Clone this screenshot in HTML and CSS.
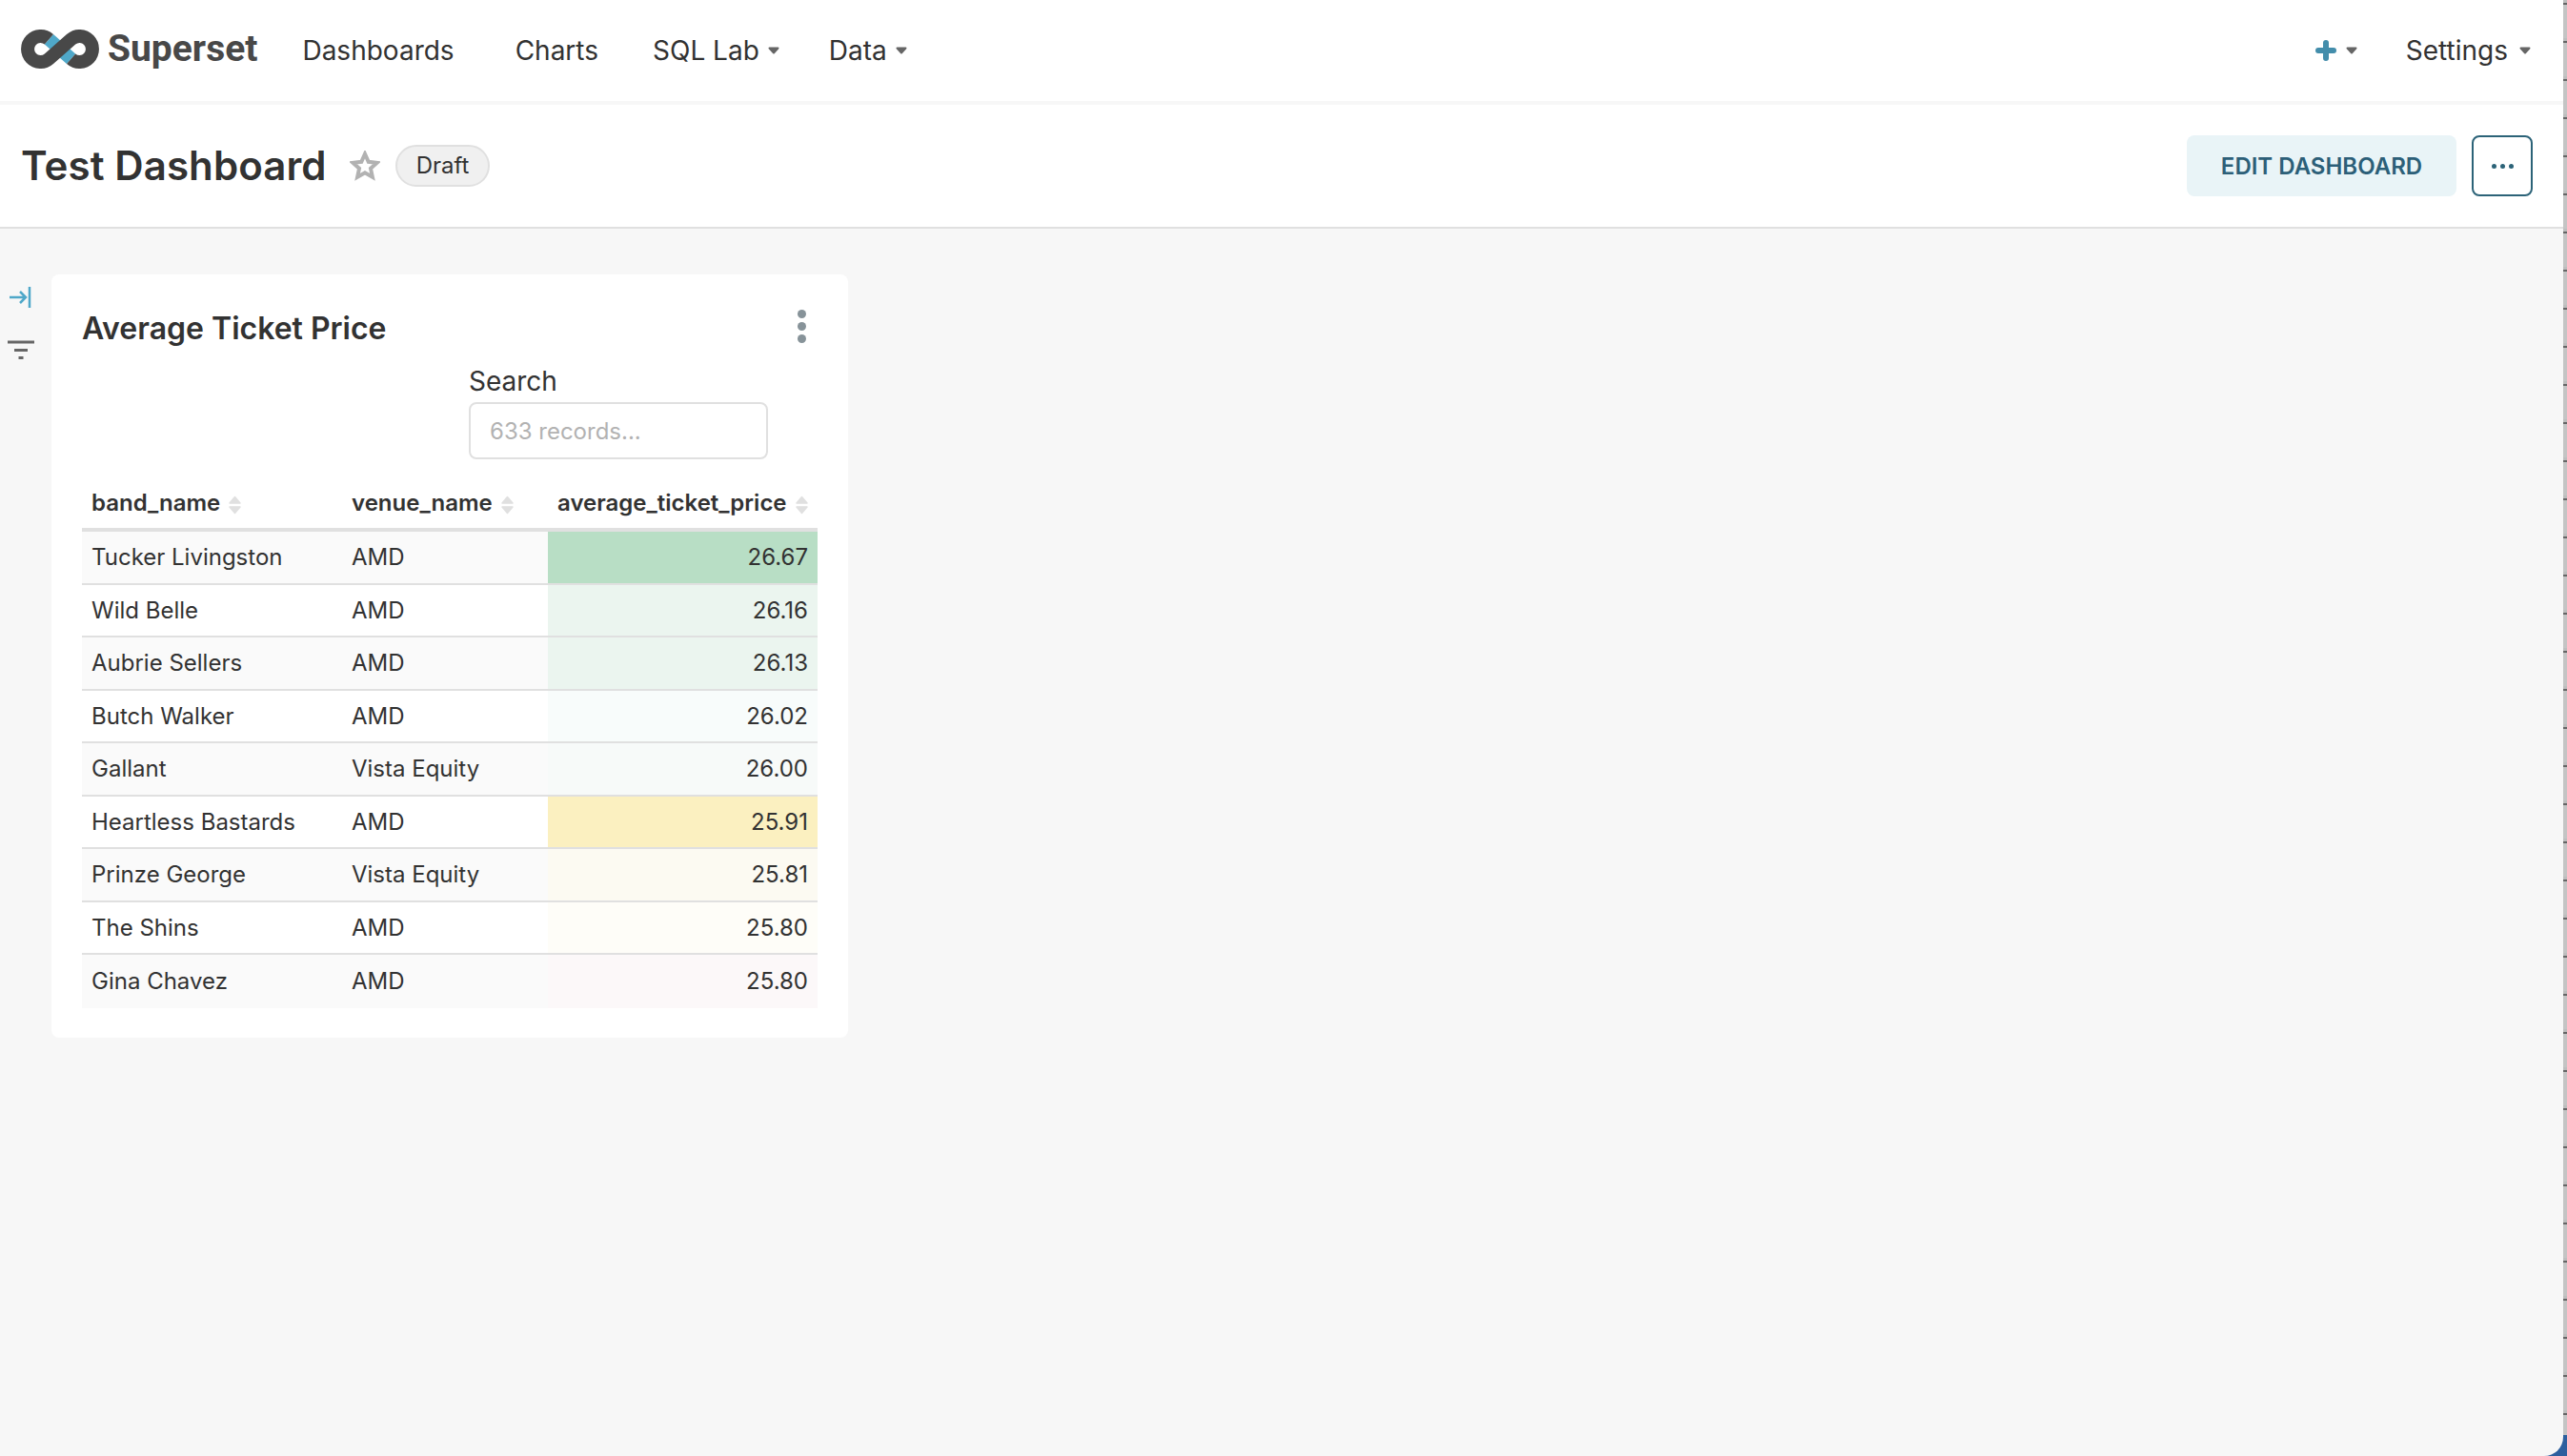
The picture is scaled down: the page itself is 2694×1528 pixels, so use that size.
FILE: index.html
```html
<!DOCTYPE html>
<html lang="en">
<head>
  <meta charset="UTF-8" />
  <title>Test Dashboard</title>
  <link rel="stylesheet" href="styles.css">
</head>
<body>

<div class="app">

  <!-- Top nav -->
  <nav class="navbar">
    <a class="brand">
      <svg class="brand-logo" width="82" height="41" viewBox="0 0 82 41">
        <path d="M29.4 10.3L52.6 30.7" fill="none" stroke="#4fa8c9" stroke-width="14"/>
        <path d="M29.4 10.3A13.5 13.5 0 1 0 29.4 30.7L52.6 10.3A13.5 13.5 0 1 1 52.6 30.7" fill="none" stroke="#484848" stroke-width="14"/>
      </svg>
      <span class="brand-name">Superset</span>
    </a>
    <a class="nav-link nav-dashboards">Dashboards</a>
    <a class="nav-link nav-charts">Charts</a>
    <a class="nav-link nav-sql">SQL Lab <svg class="caret" viewBox="0 0 12 8"><path d="M1.500 1.500h9L6 6.500z"/></svg></a>
    <a class="nav-link">Data <svg class="caret" viewBox="0 0 12 8"><path d="M1.500 1.500h9L6 6.500z"/></svg></a>
    <div class="nav-right">
      <a class="nav-link nav-plus">
        <svg class="plus-icon" viewBox="0 0 22 22"><path d="M11 3v16M3 11h16"/></svg>
        <svg class="caret" viewBox="0 0 12 8"><path d="M1.500 1.500h9L6 6.500z"/></svg>
      </a>
      <a class="nav-link nav-settings">Settings <svg class="caret" viewBox="0 0 12 8"><path d="M1.500 1.500h9L6 6.500z"/></svg></a>
    </div>
  </nav>

  <!-- Dashboard header -->
  <header class="dash-header">
    <h1 class="dash-title">Test Dashboard</h1>
    <svg class="star-icon" viewBox="0 0 32 32"><path d="M16 3.500l3.700 8.300 9 1-6.700 6 1.900 8.900L16 23.200l-7.900 4.500 1.900-8.900-6.700-6 9-1z"/></svg>
    <span class="tag">Draft</span>
    <div class="dash-actions">
      <button class="btn-edit">EDIT DASHBOARD</button>
      <button class="btn-more"><i></i><i></i><i></i></button>
    </div>
  </header>

  <div class="content">
    <aside class="filter-bar">
      <svg class="expand-icon" viewBox="0 0 24 24"><path d="M1 12h17M12 6l6 6-6 6M22 1v22"/></svg>
      <svg class="filter-icon" viewBox="0 0 28 20"><path d="M0 2h28M7 10.500h14M11.500 18.500h5"/></svg>
    </aside>

    <section class="card">
      <div class="card-head">
        <h2 class="card-title">Average Ticket Price</h2>
        <div class="kebab"><i></i><i></i><i></i></div>
      </div>

      <div class="search">
        <label class="search-label">Search</label>
        <input class="search-input" placeholder="633 records...">
      </div>

      <table class="data-table">
        <thead>
          <tr>
            <th class="col-band">band_name <svg class="sort" viewBox="0 0 14 20"><path d="M7 1.500l5.500 6.500h-11zM7 18.500l5.500-6.500h-11z"/></svg></th>
            <th class="col-venue">venue_name <svg class="sort" viewBox="0 0 14 20"><path d="M7 1.500l5.500 6.500h-11zM7 18.500l5.500-6.500h-11z"/></svg></th>
            <th class="col-price">average_ticket_price <svg class="sort" viewBox="0 0 14 20"><path d="M7 1.500l5.500 6.500h-11zM7 18.500l5.500-6.500h-11z"/></svg></th>
          </tr>
        </thead>
        <tbody>
          <tr><td>Tucker Livingston</td><td>AMD</td><td class="num" style="background:#b8dec5">26.67</td></tr>
          <tr><td>Wild Belle</td><td>AMD</td><td class="num" style="background:#ebf5ef">26.16</td></tr>
          <tr><td>Aubrie Sellers</td><td>AMD</td><td class="num" style="background:#ebf5ef">26.13</td></tr>
          <tr><td>Butch Walker</td><td>AMD</td><td class="num" style="background:#f8fcfb">26.02</td></tr>
          <tr><td>Gallant</td><td>Vista Equity</td><td class="num" style="background:#f7faf9">26.00</td></tr>
          <tr><td>Heartless Bastards</td><td>AMD</td><td class="num" style="background:#fbf0c0">25.91</td></tr>
          <tr><td>Prinze George</td><td>Vista Equity</td><td class="num" style="background:#fcfaf2">25.81</td></tr>
          <tr><td>The Shins</td><td>AMD</td><td class="num" style="background:#fefdf8">25.80</td></tr>
          <tr><td>Gina Chavez</td><td>AMD</td><td class="num" style="background:#fcf8f9">25.80</td></tr>
        </tbody>
      </table>
    </section>
  </div>

</div>

</body>
</html>
```

FILE: styles.css
```css
html, body {
  height: 100%;
}
body {
  margin: 0;
  overflow: hidden;
  font-family: Inter, "Liberation Sans", sans-serif;
  color: #323232;
  background:
    linear-gradient(#2d5f9e, #2d5f9e) right bottom / 30px 22px no-repeat,
    repeating-linear-gradient(#bdbdbd 0, #bdbdbd 3px, #666 3px, #666 5px, #c4c4c4 5px, #c4c4c4 40px);
}
.app {
  width: 2690px;
  height: 1528px;
  background: #f7f7f7;
  border-bottom-right-radius: 20px;
  overflow: hidden;
}

/* top nav */
.navbar {
  display: flex;
  align-items: center;
  gap: 50px;
  height: 106px;
  padding: 0 34px 0 22px;
  background: #fff;
  border-bottom: 4px solid #f7f7f7;
}
.brand {
  display: flex;
  align-items: center;
  gap: 9px;
  margin-top: -4px;
  margin-right: -3px;
}
.brand-name {
  font-family: Roboto, sans-serif;
  font-size: 39px;
  font-weight: 700;
  color: #484848;
}
.nav-link {
  font-size: 28px;
  display: flex;
  align-items: center;
  gap: 9px;
  white-space: nowrap;
}
.nav-dashboards {
  margin-right: 14px;
}
.nav-charts {
  margin-right: 7px;
}
.nav-sql {
  margin-right: 2px;
}
.nav-right {
  margin-left: auto;
  display: flex;
  align-items: center;
  gap: 51px;
}
.nav-plus {
  gap: 10px;
}
.nav-settings {
  gap: 12px;
}
.caret {
  width: 12px;
  height: 8px;
  fill: #666;
  stroke: #666;
  stroke-width: 2;
  stroke-linejoin: round;
}
.plus-icon {
  width: 22px;
  height: 22px;
  fill: none;
  stroke: #438dab;
  stroke-width: 6;
  stroke-linecap: round;
}

/* dashboard header */
.dash-header {
  display: flex;
  align-items: center;
  height: 128px;
  padding: 0 32px 0 22px;
  background: #fff;
  border-bottom: 2px solid #e0e0e0;
}
.dash-title {
  margin: 0 24px 0 0;
  font-size: 42px;
  font-weight: 600;
  letter-spacing: 0.1px;
  line-height: 48px;
  white-space: nowrap;
}
.star-icon {
  width: 32px;
  height: 32px;
  margin-right: 16px;
  fill: none;
  stroke: #b2b2b2;
  stroke-width: 4;
}
.tag {
  box-sizing: border-box;
  height: 44px;
  padding: 0 20px;
  line-height: 40px;
  font-size: 24px;
  background: #f0f0f0;
  border: 2px solid #e0e0e0;
  border-radius: 22px;
}
.dash-actions {
  margin-left: auto;
  display: flex;
  gap: 16px;
}
.btn-edit {
  width: 283px;
  height: 64px;
  border: none;
  border-radius: 8px;
  background: #e9f4f7;
  color: #2c5f78;
  font-family: inherit;
  font-size: 24px;
  font-weight: 600;
}
.btn-more {
  box-sizing: border-box;
  width: 64px;
  height: 64px;
  display: flex;
  align-items: center;
  justify-content: center;
  gap: 4px;
  background: #fff;
  border: 2px solid #2c6378;
  border-radius: 8px;
}
.btn-more i {
  width: 5px;
  height: 5px;
  border-radius: 50%;
  background: #2c6378;
}

/* content */
.content {
  display: flex;
  align-items: flex-start;
}
.filter-bar {
  box-sizing: border-box;
  width: 54px;
  padding: 60px 0 0 8px;
  display: flex;
  flex-direction: column;
  gap: 33px;
}
.expand-icon {
  width: 24px;
  height: 24px;
  margin-left: 1px;
  fill: none;
  stroke: #4fa8c9;
  stroke-width: 2.5;
}
.filter-icon {
  width: 28px;
  height: 20px;
  fill: none;
  stroke: #666;
  stroke-width: 3;
}
.card {
  box-sizing: border-box;
  width: 836px;
  margin-top: 48px;
  padding: 37px 32px 31px;
  background: #fff;
  border-radius: 8px;
}
.card-head {
  display: flex;
  align-items: center;
  justify-content: space-between;
}
.card-title {
  margin: 0;
  font-size: 32px;
  font-weight: 600;
  line-height: 40px;
}
.kebab {
  display: flex;
  flex-direction: column;
  gap: 4px;
  margin: -6px 12px 0 0;
}
.kebab i {
  width: 9px;
  height: 9px;
  border-radius: 50%;
  background: #879399;
}
.search {
  width: 314px;
  margin: 17px 0 0 406px;
}
.search-label {
  display: block;
  font-size: 28px;
  line-height: 36px;
  margin-bottom: 4px;
}
.search-input {
  box-sizing: border-box;
  display: block;
  width: 100%;
  height: 60px;
  padding: 0 20px;
  font-family: inherit;
  font-size: 24px;
  color: #323232;
  background: #fff;
  border: 2px solid #e0e0e0;
  border-radius: 8px;
  outline: none;
}
.search-input::placeholder {
  color: #b2b2b2;
}

/* table */
.data-table {
  width: 772px;
  margin-top: 18px;
  table-layout: fixed;
  border-collapse: separate;
  border-spacing: 0;
  font-size: 24px;
}
.data-table th, .data-table td {
  box-sizing: border-box;
}
.col-band {
  width: 273px;
}
.col-venue {
  width: 216px;
}
.col-price {
  width: 283px;
}
.data-table th {
  height: 58px;
  padding: 0 10px;
  text-align: left;
  font-weight: 600;
  white-space: nowrap;
  border-bottom: 4px solid #e0e0e0;
}
.sort {
  width: 15px;
  height: 20px;
  margin-left: 2px;
  vertical-align: -4px;
  fill: #e0e0e0;
  stroke: #e0e0e0;
  stroke-width: 1.5;
  stroke-linejoin: round;
}
.data-table td {
  height: 55.5px;
  padding: 0 10px;
  border-bottom: 2px solid #e0e0e0;
  white-space: nowrap;
}
.data-table tbody tr:nth-child(odd) {
  background: #fafafa;
}
.data-table tbody tr:last-child td {
  border-bottom: none;
}
.num {
  text-align: right;
}
```
